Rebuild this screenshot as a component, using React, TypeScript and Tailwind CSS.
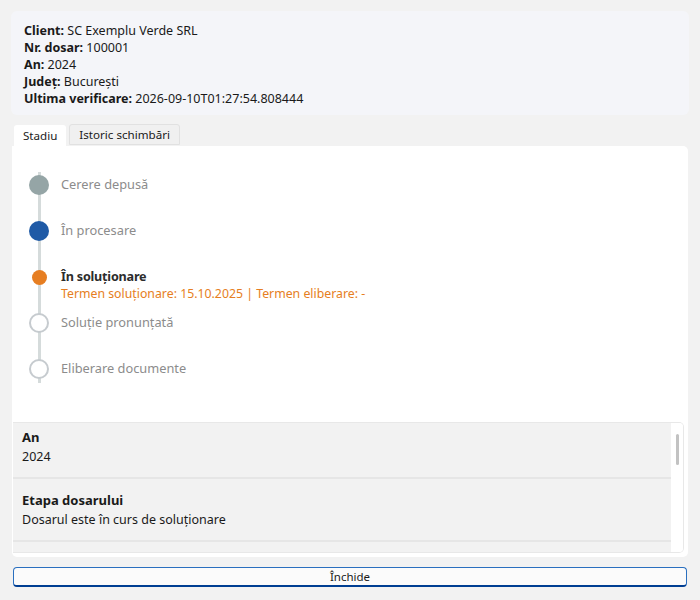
import React, { useState } from 'react';

type Step = {
  label: string;
  state: 'done' | 'passed' | 'current' | 'todo';
  note?: string;
};

const steps: Step[] = [
  { label: 'Cerere depusă', state: 'done' },
  { label: 'În procesare', state: 'passed' },
  { label: 'În soluționare', state: 'current', note: 'Termen soluționare: 15.10.2025 | Termen eliberare: -' },
  { label: 'Soluție pronunțată', state: 'todo' },
  { label: 'Eliberare documente', state: 'todo' },
];

const details = [
  { title: 'An', value: '2024' },
  { title: 'Etapa dosarului', value: 'Dosarul este în curs de soluționare' },
];

function Dot({ state }: { state: Step['state'] }) {
  if (state === 'done') return <span className="block w-[20px] h-[20px] rounded-full bg-[#95a5a6]" />;
  if (state === 'passed') return <span className="block w-[20px] h-[20px] rounded-full bg-[#1f5aa6]" />;
  if (state === 'current') return <span className="block w-[15px] h-[15px] rounded-full bg-[#e67e22]" />;
  return <span className="block w-[20px] h-[20px] rounded-full bg-white border-2 border-[#c6cbcf]" />;
}

export default function App() {
  const [tab, setTab] = useState(0);

  return (
    <div
      className="w-[700px] h-[600px] bg-[#f2f2f2] flex flex-col px-[11px] pt-[11px] text-[12.5px] text-[#1a1a1a]"
      style={{ fontFamily: '"Noto Sans", "Open Sans", sans-serif' }}
    >
      {/* date dosar */}
      <div className="bg-[#f4f5f9] rounded-[6px] pl-[13px] pt-[11px] pb-[8px] leading-[17px]">
        <div><b>Client:</b> SC Exemplu Verde SRL</div>
        <div><b>Nr. dosar:</b> 100001</div>
        <div><b>An:</b> 2024</div>
        <div><b>Județ:</b> București</div>
        <div><b>Ultima verificare:</b> 2026-09-10T01:27:54.808444</div>
      </div>

      {/* tab-uri */}
      <div className="flex items-end gap-[3px] mt-[9px] pl-[3px] h-[22px] text-[11.6px]">
        {['Stadiu', 'Istoric schimbări'].map((t, i) => (
          <button
            key={t}
            onClick={() => setTab(i)}
            className={
              tab === i
                ? 'h-[21px] px-[9px] bg-white rounded-t-[3px] leading-[18px]'
                : 'h-[21px] mb-[1px] px-[9px] bg-[#f0f0f0] border border-[#e1e1e1] rounded-t-[3px] leading-[18px]'
            }
          >
            {t}
          </button>
        ))}
      </div>

      <div className="ml-[1px] mr-[1px] h-[411px] bg-white rounded-b-[5px] rounded-tr-[5px] flex flex-col">
        {/* stadii */}
        <div className="relative mt-[16px] ml-[16px] h-[230px]">
          <div className="absolute left-[9.5px] top-[10px] w-[3px] h-[211px] bg-[#d5dbdb]" />
          {steps.map((s) => (
            <div key={s.label} className="relative flex h-[46px]">
              <div className="w-[22px] flex justify-center pt-[13px]">
                {s.state === 'current' ? (
                  <div className="pt-[2.5px]">
                    <Dot state={s.state} />
                  </div>
                ) : (
                  <Dot state={s.state} />
                )}
              </div>
              <div className="pl-[11px] pt-[14px] leading-[17px]">
                <div
                  className={
                    s.state === 'current'
                      ? 'text-[12.6px] font-bold tracking-[-0.2px] text-[#2c2c2c]'
                      : 'text-[12.8px] text-[#8c8c8c]'
                  }
                >
                  {s.label}
                </div>
                {s.note && <div className="text-[12.3px] text-[#e67e22]">{s.note}</div>}
              </div>
            </div>
          ))}
        </div>

        {/* detalii */}
        <div className="mt-[30px] ml-[1px] mr-[4px] h-[131px] flex border border-l-0 border-[#e8e8e8] rounded-r-[5px] overflow-hidden">
          <div className="flex-1 overflow-hidden">
            <div className="-mt-[7px]">
              {details.map((d) => (
                <div key={d.title} className="bg-[#f2f2f2] h-[63px] pl-[9px] pt-[12px] leading-[19px] border-b-2 border-[#e6e6e6]">
                  <div className="font-bold text-[13px]">{d.title}</div>
                  <div>{d.value}</div>
                </div>
              ))}
              <div className="bg-[#f2f2f2] h-[63px]" />
            </div>
          </div>
          <div className="w-[12px] bg-white flex justify-center pt-[11px]">
            <div className="w-[3px] h-[31px] rounded-full bg-[#c2c2c2]" />
          </div>
        </div>
      </div>

      <button className="mt-[10px] mx-[2px] h-[20px] flex items-center justify-center bg-[#fbfbfb] border border-[#2a6fbf] border-b-[#003e92] border-b-2 rounded-[4px] leading-[16px] text-[11.5px] text-[#1a1a1a]">
        Închide
      </button>
    </div>
  );
}
